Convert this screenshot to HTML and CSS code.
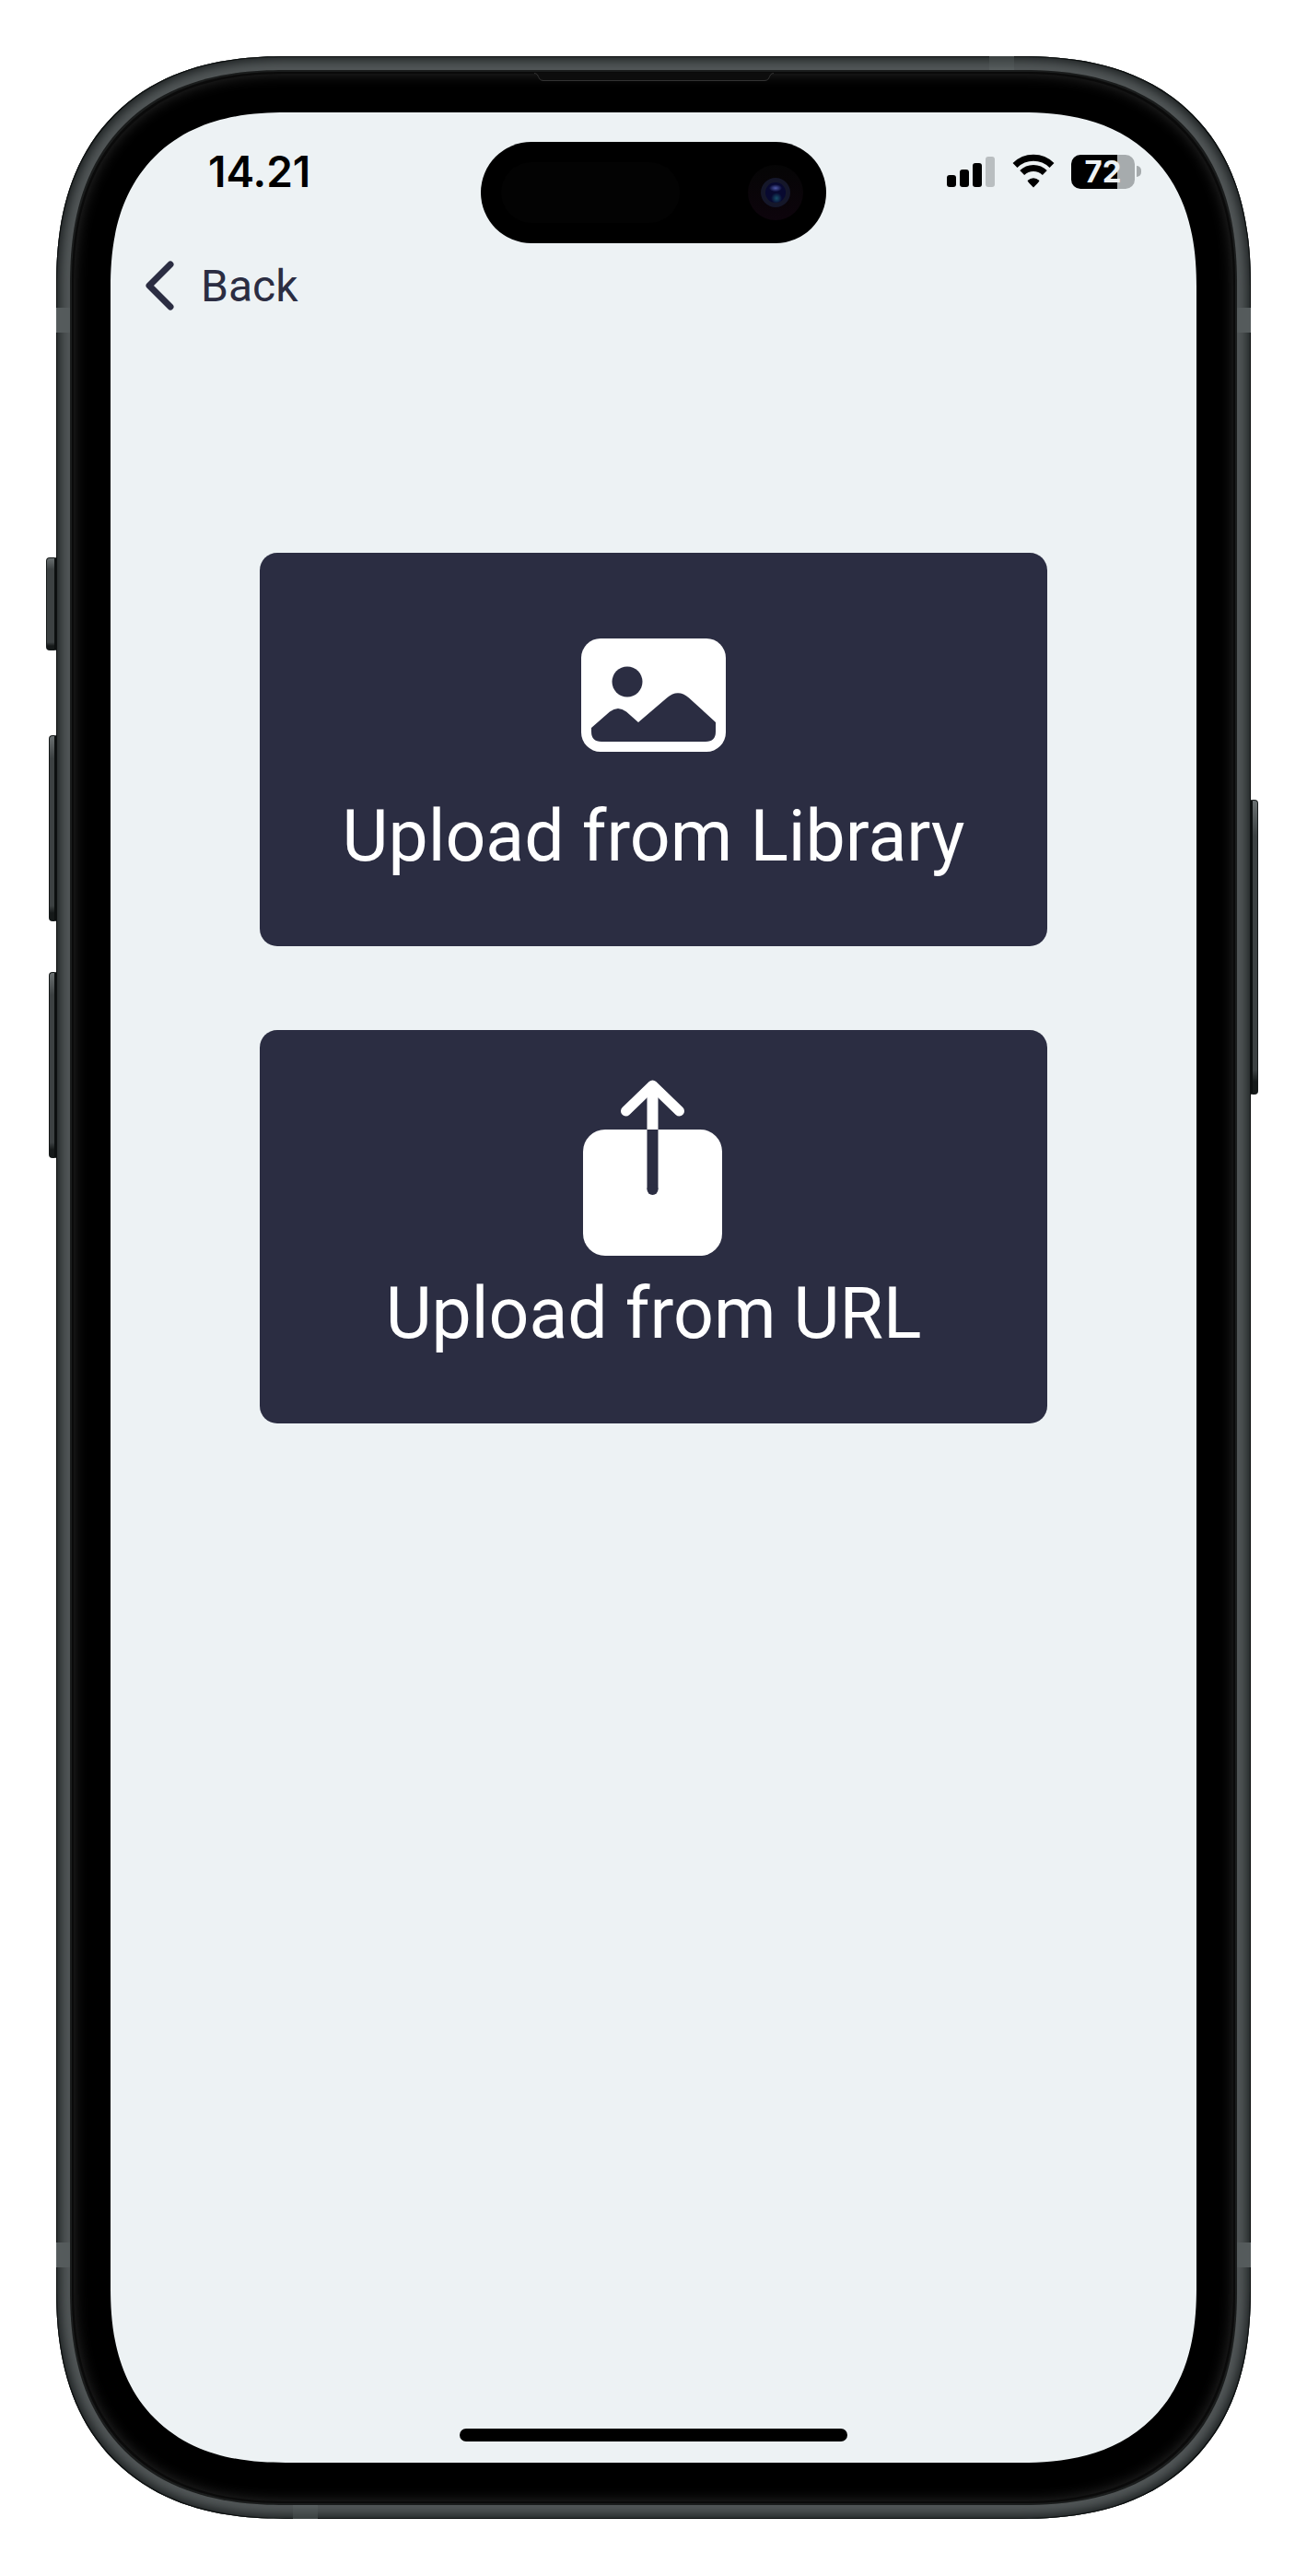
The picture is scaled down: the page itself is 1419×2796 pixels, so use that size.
FILE: index.html
```
<!DOCTYPE html>
<html lang="en">
<head>
<meta charset="utf-8">
<meta name="viewport" content="width=device-width, initial-scale=1">
<title>Upload</title>
<link rel="stylesheet" href="styles.css">
</head>
<body>
<div class="phone">
  <span class="key key-action"></span>
  <span class="key key-up"></span>
  <span class="key key-down"></span>
  <span class="key key-power"></span>
  <span class="band band-side band-left band-high"></span>
  <span class="band band-side band-left band-low"></span>
  <span class="band band-side band-right band-high"></span>
  <span class="band band-side band-right band-low"></span>
  <span class="band band-top"></span>
  <span class="band band-bottom"></span>
  <div class="bezel">
    <svg class="speaker" viewBox="0 0 260 10" aria-hidden="true"><path d="M0 0C6 0 3 9 10 9H250C257 9 254 0 260 0Z" fill="#0d0d0d"/><path d="M0 .5C6 .5 3 8.500 10 8.500H250C257 8.500 254 .5 260 .5" fill="none" stroke="#333"/></svg>
    <div class="screen">
      <header class="status">
        <time class="clock">14.21</time>
        <div class="island">
          <span class="sensor"></span>
          <span class="camera"><span class="lens"></span></span>
        </div>
        <div class="indicators">
          <svg class="signal" viewBox="0 0 54 44" aria-label="Signal">
            <rect x="1" y="26" width="10" height="13" rx="3"/>
            <rect x="15" y="20" width="10" height="19" rx="3"/>
            <rect x="29" y="13" width="10" height="26" rx="3"/>
            <rect x="43" y="6" width="10" height="33" rx="3" fill="#b9bec0"/>
          </svg>
          <svg class="wifi" viewBox="0 0 46 44" aria-label="Wi-Fi">
            <g fill="none" stroke="#000" stroke-width="7">
              <path d="M3 15.500A28.500 28.500 0 0 1 43 15.500"/>
              <path d="M10.700 23.500A17.500 17.500 0 0 1 35.300 23.500"/>
            </g>
            <path d="M16.500 32Q23 26.500 29.500 32Q29.500 33 23 39.500Q16.500 33 16.500 32Z"/>
          </svg>
          <span class="battery"><span class="cell">72</span><span class="nub"></span></span>
        </div>
      </header>
      <nav class="nav">
        <a class="back" href="#">
          <svg class="chevron" viewBox="0 0 32 56" aria-hidden="true"><path d="M27 5L4 28L27 51" fill="none" stroke="currentColor" stroke-width="7" stroke-linecap="round" stroke-linejoin="round"/></svg>
          <span>Back</span>
        </a>
      </nav>
      <main class="choices">
        <button class="card" type="button">
          <svg class="icon" viewBox="0 0 196 196" aria-hidden="true">
            <rect x="19" y="41" width="157" height="123" rx="21" fill="#fff"/>
            <circle cx="69" cy="88" r="16.500" fill="#2b2d42"/>
            <path d="M30 138L50 120.500Q59 113.500 68 120.500L81 132L112 105.500Q124 95 136 105.500L165 132V142Q165 153 154 153H41Q30 153 30 142Z" fill="#2b2d42"/>
          </svg>
          <span class="label">Upload from Library</span>
        </button>
        <button class="card" type="button">
          <svg class="icon" viewBox="0 0 196 196" aria-hidden="true">
            <rect x="21" y="56" width="151" height="137" rx="24" fill="#fff"/>
            <path d="M96.500 56V121" stroke="#2b2d42" stroke-width="12"/>
            <circle cx="96.500" cy="121" r="6" fill="#2b2d42"/>
            <path d="M96.500 56V12" stroke="#fff" stroke-width="12"/>
            <path d="M67.500 36L96.500 8L125.500 36" fill="none" stroke="#fff" stroke-width="11" stroke-linecap="round" stroke-linejoin="round"/>
          </svg>
          <span class="label">Upload from URL</span>
        </button>
      </main>
      <div class="home"></div>
    </div>
  </div>
</div>
</body>
</html>
```
FILE: styles.css
```
* { box-sizing: border-box; }

body {
  margin: 0;
  padding: 61px;
  background: #fff;
  font-family: Roboto, "Liberation Sans", sans-serif;
}

.phone {
  position: relative;
  display: flex;
  min-height: calc(100vh - 123px);
  padding: 17px;
  border-radius: 225px;
  background: #525758;
  box-shadow: inset 0 0 0 1px #0d1010, inset 0 0 12px 4px #1a1e1f;
}

.bezel {
  position: relative;
  display: flex;
  flex: 1;
  padding: 44px 42px;
  border-radius: 208px;
  background: #000;
  box-shadow: 0 0 0 2px #1a1c1c, inset 0 0 0 2px #0a0a0a, inset 0 0 16px 1px #303030;
}

.screen {
  display: flex;
  flex: 1;
  flex-direction: column;
  padding: 32px 0 23px;
  border-radius: 162px;
  background: #edf2f4;
}

/* Continuous-curvature corners where the browser can draw them */
@supports (corner-shape: superellipse(1.25)) {
  .phone, .bezel, .screen { corner-shape: superellipse(1.25); }
  .phone { border-radius: 250px; }
  .bezel { border-radius: 233px; }
  .screen { border-radius: 190px; }
}

/* Hardware keys and antenna bands, laid over the rim */
.key {
  position: absolute;
  right: 100%;
  width: 8px;
  border: 1px solid #151919;
  border-right: 2px solid #0c0f0f;
  border-radius: 4px 0 0 4px;
  background: linear-gradient(#6a7071, #3c4142 12%, #3c4142 92%, #151919 96%);
}
.key-action { top: 544px; width: 11px; height: 101px; }
.key-up { top: 737px; height: 202px; }
.key-down { top: 994px; height: 202px; }
.key-power {
  top: 807px;
  right: auto;
  left: 100%;
  height: 320px;
  border-right: 1px solid #151919;
  border-left: 2px solid #0c0f0f;
  border-radius: 0 4px 4px 0;
}

.band { position: absolute; background: #555b5c; }
.band-side { width: 16px; height: 27px; }
.band-left { left: 0; }
.band-right { right: 0; }
.band-high { top: 273px; }
.band-low { bottom: 273px; }
.band-top { top: 0; right: 257px; width: 27px; height: 16px; background: linear-gradient(#3a4040, #5a6061); }
.band-bottom { bottom: 0; left: 257px; width: 27px; height: 16px; background: linear-gradient(#5a6061, #3a4040); }

.speaker {
  position: absolute;
  top: 1px;
  left: 50%;
  width: 260px;
  height: 10px;
  margin-left: -130px;
}

.status {
  display: grid;
  grid-template-columns: 1fr 375px 1fr;
  align-items: start;
  font-family: Inter, "Liberation Sans", sans-serif;
}

.clock {
  padding: 10px 0 0 106px;
  font-size: 46px;
  font-weight: 600;
  line-height: 44px;
  color: #000;
}

.island {
  display: flex;
  align-items: center;
  justify-content: space-between;
  height: 110px;
  padding: 0 25px 0 22px;
  border-radius: 55px;
  background: #000;
}
.sensor { width: 194px; height: 66px; border-radius: 33px; background: #030303; }
.camera {
  display: flex;
  align-items: center;
  justify-content: center;
  width: 60px;
  height: 60px;
  border-radius: 50%;
  background: linear-gradient(#050505, #0d040c);
}
.lens {
  width: 32px;
  height: 32px;
  border: 5px solid #15172a;
  border-radius: 50%;
  background:
    radial-gradient(ellipse 7px 4px at 50% 28%, #4f5aa8, transparent),
    radial-gradient(circle 6px at 55% 78%, #17506a, transparent),
    #080930;
}

.indicators {
  display: flex;
  align-items: center;
  justify-content: flex-end;
  gap: 18px;
  padding: 10px 60px 0 0;
}
.signal { width: 54px; height: 44px; }
.wifi { width: 46px; height: 44px; }
.battery { display: flex; align-items: center; gap: 2px; }
.cell {
  width: 69px;
  height: 37px;
  border-radius: 10px;
  background: linear-gradient(90deg, #000 50px, #a6abad 50px);
  font-size: 33px;
  font-weight: 700;
  line-height: 37px;
  text-align: center;
  color: #edf2f4;
}
.nub { width: 5px; height: 12px; border-radius: 0 6px 6px 0; background: #a6abad; }

.nav { display: flex; padding: 14px 38px 0; }
.back {
  display: flex;
  align-items: center;
  gap: 28px;
  height: 64px;
  font-size: 48px;
  line-height: 64px;
  color: #2b2d42;
  text-decoration: none;
}
.back span { padding-top: 2px; }
.chevron { width: 32px; height: 56px; }

.choices {
  display: flex;
  flex-direction: column;
  gap: 91px;
  padding: 258px 162px 0;
}

.card {
  display: flex;
  flex-direction: column;
  align-items: center;
  gap: 12px;
  padding: 52px 24px 71px;
  border: 0;
  border-radius: 19px;
  background: #2b2d42;
  font-family: inherit;
  color: #fff;
}
.icon { width: 196px; height: 196px; }
.label { font-size: 77px; line-height: 96px; white-space: nowrap; }

.home {
  width: 421px;
  height: 14px;
  margin: auto auto 0;
  border-radius: 7px;
  background: #000;
}
```
